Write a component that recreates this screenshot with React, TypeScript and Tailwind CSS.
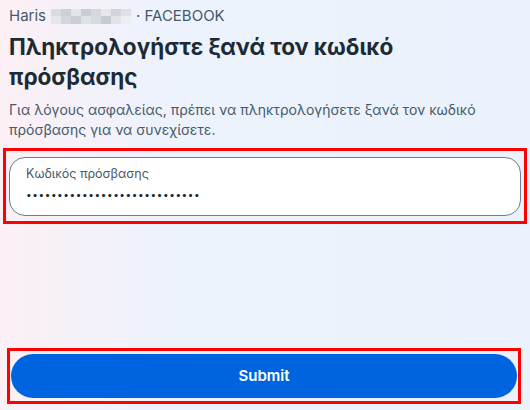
const blurShades = [
  '#d9dce1', '#cdd1d7', '#e2e4e8', '#c9cdd4', '#d5d8dd', '#e6e8eb', '#d0d3d9', '#dde0e4',
  '#e4e6ea', '#d3d6dc', '#cbcfd5', '#dfe2e6', '#d6d9de', '#c8ccd2', '#e0e3e7', '#eceef1',
];

function BlurredName() {
  return (
    <span className="mx-[5px] inline-grid h-[15px] w-[80px] grid-cols-8 grid-rows-2 align-[-2px]">
      {blurShades.map((c, i) => (
        <span key={i} style={{ backgroundColor: c }} />
      ))}
    </span>
  );
}

export default function App() {
  return (
    <div
      className="h-[410px] w-full overflow-hidden bg-gradient-to-r from-[#fcf0f5] via-[#edf2fc] via-30% to-[#ebf2fd] px-[9px] pt-[6px] text-[#1c2b33]"
      style={{ fontFamily: 'Inter, "Noto Sans", sans-serif' }}
    >
      <div className="flex items-center text-[15px] leading-[20px] text-[#465a69]">
        <span>Haris</span>
        <BlurredName />
        <span>· FACEBOOK</span>
      </div>

      <h1 className="mt-[6px] max-w-[420px] text-[22.5px] font-bold leading-[30px] text-[#1c2b33]">
        Πληκτρολογήστε ξανά τον κωδικό πρόσβασης
      </h1>

      <p className="mt-[8px] max-w-[480px] text-[14px] leading-[20px] text-[#465a69]">
        Για λόγους ασφαλείας, πρέπει να πληκτρολογήσετε ξανά τον κωδικό πρόσβασης για να συνεχίσετε.
      </p>

      <div className="-mx-[6px] mt-[8px] w-[524px] border-[3px] border-[#ff0000] px-[3px] pb-[5px] pt-[6px]">
        <div className="h-[59px] rounded-[16px] border border-[#6b7f8f] bg-white px-[16px] pt-[8px]">
          <div className="text-[12.5px] leading-[16px] text-[#465a69]">Κωδικός πρόσβασης</div>
          <div className="mt-[6px] text-[10px] leading-[12px] tracking-[0.6px] text-[#1c2b33]">
            ••••••••••••••••••••••••••••
          </div>
        </div>
      </div>

      <div className="-mx-[2px] mt-[124px] w-[514px] border-[3px] border-[#ff0000] px-[1px] pb-[3px] pt-[3px]">
        <button className="flex h-[44px] w-full items-center justify-center rounded-full bg-[#0064e0] text-[15px] font-semibold text-white">
          Submit
        </button>
      </div>
    </div>
  );
}
